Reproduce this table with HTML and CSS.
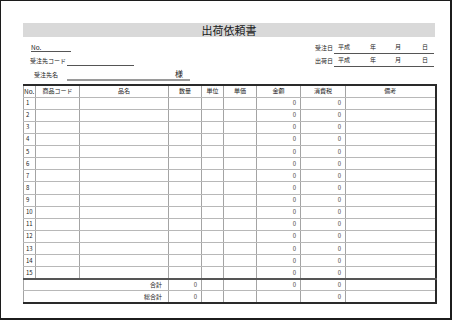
FILE: index.html
```html
<!DOCTYPE html>
<html lang="ja">
<head>
<meta charset="utf-8">
<link rel="stylesheet" href="styles.css">
</head>
<body>
<div class="frame">
  <div class="sheet">
    <div class="title">出荷依頼書</div>
    <div class="info">
      <div class="left">
        <div class="lrow r1"><span class="no">No.</span></div>
        <div class="lrow r2"><span class="lbl code-lbl">受注先コード</span><span class="uline code"></span></div>
        <div class="lrow r3"><span class="lbl name-lbl">受注先名</span><span class="uline name">様</span></div>
      </div>
      <div class="right">
        <div class="drow d1"><span class="dlbl">受注日</span><span class="dline"><span class="era">平成</span><span class="yy">年</span><span class="mm">月</span><span class="dd">日</span></span></div>
        <div class="drow d2"><span class="dlbl">出荷日</span><span class="dline"><span class="era">平成</span><span class="yy">年</span><span class="mm">月</span><span class="dd">日</span></span></div>
      </div>
    </div>
    <table class="grid">
      <colgroup>
        <col class="c-no"><col class="c-code"><col class="c-name"><col class="c-qty"><col class="c-unit"><col class="c-price"><col class="c-amt"><col class="c-tax"><col class="c-note">
      </colgroup>
      <thead>
        <tr><th class="h-no">No.</th><th>商品コード</th><th>品名</th><th>数量</th><th>単位</th><th>単価</th><th>金額</th><th>消費税</th><th>備考</th></tr>
      </thead>
      <tbody>
        <tr><td class="n">1</td><td></td><td></td><td></td><td></td><td></td><td class="v">0</td><td class="v">0</td><td></td></tr>
        <tr><td class="n">2</td><td></td><td></td><td></td><td></td><td></td><td class="v">0</td><td class="v">0</td><td></td></tr>
        <tr><td class="n">3</td><td></td><td></td><td></td><td></td><td></td><td class="v">0</td><td class="v">0</td><td></td></tr>
        <tr><td class="n">4</td><td></td><td></td><td></td><td></td><td></td><td class="v">0</td><td class="v">0</td><td></td></tr>
        <tr><td class="n">5</td><td></td><td></td><td></td><td></td><td></td><td class="v">0</td><td class="v">0</td><td></td></tr>
        <tr><td class="n">6</td><td></td><td></td><td></td><td></td><td></td><td class="v">0</td><td class="v">0</td><td></td></tr>
        <tr><td class="n">7</td><td></td><td></td><td></td><td></td><td></td><td class="v">0</td><td class="v">0</td><td></td></tr>
        <tr><td class="n">8</td><td></td><td></td><td></td><td></td><td></td><td class="v">0</td><td class="v">0</td><td></td></tr>
        <tr><td class="n">9</td><td></td><td></td><td></td><td></td><td></td><td class="v">0</td><td class="v">0</td><td></td></tr>
        <tr><td class="n">10</td><td></td><td></td><td></td><td></td><td></td><td class="v">0</td><td class="v">0</td><td></td></tr>
        <tr><td class="n">11</td><td></td><td></td><td></td><td></td><td></td><td class="v">0</td><td class="v">0</td><td></td></tr>
        <tr><td class="n">12</td><td></td><td></td><td></td><td></td><td></td><td class="v">0</td><td class="v">0</td><td></td></tr>
        <tr><td class="n">13</td><td></td><td></td><td></td><td></td><td></td><td class="v">0</td><td class="v">0</td><td></td></tr>
        <tr><td class="n">14</td><td></td><td></td><td></td><td></td><td></td><td class="v">0</td><td class="v">0</td><td></td></tr>
        <tr class="last"><td class="n">15</td><td></td><td></td><td></td><td></td><td></td><td class="v">0</td><td class="v">0</td><td></td></tr>
      </tbody>
      <tfoot>
        <tr class="sum"><td colspan="3" class="slbl">合計</td><td class="v">0</td><td></td><td></td><td class="v">0</td><td class="v">0</td><td></td></tr>
        <tr class="total"><td colspan="3" class="slbl">総合計</td><td class="v">0</td><td></td><td></td><td></td><td class="v">0</td><td></td></tr>
      </tfoot>
    </table>
  </div>
</div>
</body>
</html>
```

FILE: styles.css
```css
html, body {
  margin: 0;
  padding: 0;
  background: #ffffff;
}

.frame {
  box-sizing: border-box;
  width: 452px;
  height: 320px;
  border-style: solid;
  border-color: #1c1c1c;
  border-width: 1px 2px 2px 1px;
  background: #ffffff;
  font-family: "Noto Sans CJK JP", "Noto Sans", sans-serif;
  color: #222222;
}

.sheet {
  padding: 22px 0 0 22px;
  width: 412px;
}

.title {
  height: 14px;
  line-height: 14px;
  background: #d9d9d9;
  text-align: center;
  font-size: 11px;
  color: #1a1a1a;
}

.info {
  display: flex;
  height: 47px;
}

.left {
  display: flex;
  flex-direction: column;
  padding-left: 7px;
}

.lrow {
  display: flex;
  align-items: flex-end;
}

.r1 { height: 15px; }
.r2 { height: 14px; }
.r3 { height: 15px; }

.no {
  margin-left: 1px;
  width: 40px;
  border-bottom: 1px solid #555555;
  font-size: 6.5px;
  line-height: 8px;
}

.lbl {
  font-size: 6px;
  line-height: 8px;
  white-space: nowrap;
}

.code-lbl {
  width: 37px;
  margin-bottom: 1px;
}

.name-lbl {
  margin-left: 4px;
  width: 33px;
  margin-bottom: 2px;
}

.uline {
  display: block;
}

.code {
  width: 67px;
  height: 1px;
  border-bottom: 1px solid #555555;
}

.name {
  box-sizing: border-box;
  width: 123px;
  border-bottom: 2px solid #9a9a9a;
  text-align: right;
  padding-right: 7px;
  font-size: 8px;
  line-height: 10px;
  padding-bottom: 0;
}

.right {
  margin-left: auto;
  width: 120px;
  padding-top: 3px;
  display: flex;
  flex-direction: column;
}

.drow {
  display: flex;
  align-items: flex-end;
  font-size: 6px;
  line-height: 8px;
}

.d1 { height: 14px; }
.d2 { height: 13px; }

.dlbl {
  width: 19px;
  margin-bottom: 2px;
  white-space: nowrap;
}

.dline {
  display: flex;
  width: 100px;
  border-bottom: 1px solid #555555;
  padding-left: 4px;
  box-sizing: border-box;
  padding-bottom: 2px;
}

.era { width: 32px; }
.yy { width: 25px; }
.mm { width: 27px; }

.grid {
  border-collapse: collapse;
  table-layout: fixed;
  width: 412px;
  border-style: solid;
  border-color: #2a2a2a;
  border-width: 2px 2px 2px 1px;
  font-size: 6px;
  color: #222222;
}

.c-no { width: 12px; }
.c-code { width: 44px; }
.c-name { width: 89px; }
.c-qty { width: 33px; }
.c-unit { width: 22px; }
.c-price { width: 33px; }
.c-amt { width: 44px; }
.c-tax { width: 45px; }
.c-note { width: 90px; }

.grid tr {
  height: 12px;
}

.grid tbody tr {
  height: 12.14px;
}

.grid th,
.grid td {
  padding: 0;
  line-height: 10px;
  border-left: 1px solid #a4a4a4;
  border-right: 1px solid #a4a4a4;
  border-top: 1px solid #b8b8b8;
  border-bottom: 1px solid #b8b8b8;
  overflow: hidden;
  white-space: nowrap;
}

.grid th {
  font-weight: normal;
  text-align: center;
}

.grid th.h-no {
  text-align: left;
  font-size: 6.5px;
}

.grid td.n {
  padding-left: 2px;
  font-size: 6px;
}

.grid td.v {
  text-align: right;
  padding-right: 4px;
  color: #444444;
}

.grid tr.last td {
  border-bottom: 2px solid #555555;
}

.grid td.slbl {
  text-align: right;
  padding-right: 6px;
}
```
